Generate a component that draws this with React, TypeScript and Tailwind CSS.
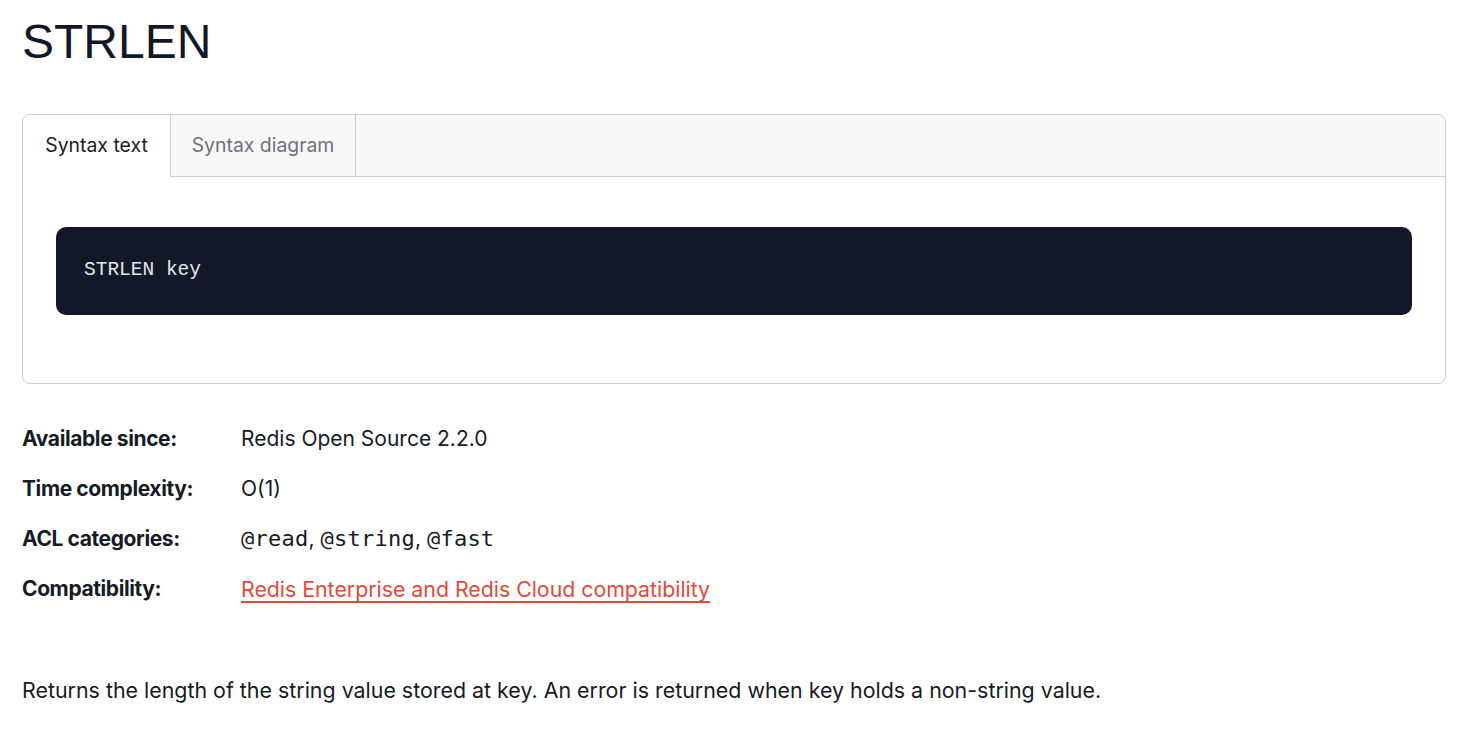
import React from "react";

export default function App() {
  const sans = { fontFamily: "Inter, 'Noto Sans', sans-serif" };
  const mono = { fontFamily: "'DejaVu Sans Mono', 'Liberation Mono', monospace" };
  return (
    <div className="min-h-screen bg-white text-[#161b26]" style={sans}>
      <div className="pl-[22px] pr-[24px] pt-[12px]">
        <h1 className="text-[48px] leading-[60px] text-[#131828] font-normal" style={{ fontFamily: "'Liberation Sans', Arial, sans-serif" }}>
          STRLEN
        </h1>

        <div className="mt-[42px] border border-[#c9cdd2] rounded-[8px] overflow-hidden">
          <div className="flex h-[62px] bg-[#f8f8f8] border-b border-[#c9cdd2]">
            <div className="w-[148px] h-[62px] bg-white border-r border-[#c9cdd2] flex items-center justify-center text-[19.4px] text-[#161b26]">
              Syntax text
            </div>
            <div className="w-[185px] border-r border-[#c9cdd2] flex items-center justify-center text-[19.4px] text-[#6b7280]">
              Syntax diagram
            </div>
          </div>
          <div className="pt-[50px] pb-[68px] px-[33px]">
            <div className="h-[88px] bg-[#131828] rounded-[10px] flex items-center px-[28px]">
              <span className="text-[19.5px] text-[#e5e7eb]" style={{ fontFamily: "'Liberation Mono', 'DejaVu Sans Mono', monospace" }}>
                STRLEN key
              </span>
            </div>
          </div>
        </div>

        <div className="mt-[41px] flex flex-col gap-[22px] text-[21px] leading-[28px]">
          <div className="flex">
            <div className="w-[219px] text-[21px] font-bold tracking-[-0.4px]">Available since:</div>
            <div>Redis Open Source 2.2.0</div>
          </div>
          <div className="flex">
            <div className="w-[219px] text-[21px] font-bold tracking-[-0.4px]">Time complexity:</div>
            <div>O(1)</div>
          </div>
          <div className="flex">
            <div className="w-[219px] text-[21px] font-bold tracking-[-0.4px]">ACL categories:</div>
            <div>
              <code className="text-[22px] tracking-[0.25px]" style={mono}>@read</code>,{" "}
              <code className="text-[22px] tracking-[0.25px]" style={mono}>@string</code>,{" "}
              <code className="text-[22px] tracking-[0.25px]" style={mono}>@fast</code>
            </div>
          </div>
          <div className="flex">
            <div className="w-[219px] text-[21px] font-bold tracking-[-0.4px]">Compatibility:</div>
            <a href="#" className="text-[21.3px] text-[#e5493a] underline underline-offset-[4px]">
              Redis Enterprise and Redis Cloud compatibility
            </a>
          </div>
        </div>

        <p className="mt-[73px] text-[21.4px] leading-[28px]">
          Returns the length of the string value stored at key. An error is returned when key holds a non-string value.
        </p>
      </div>
    </div>
  );
}
